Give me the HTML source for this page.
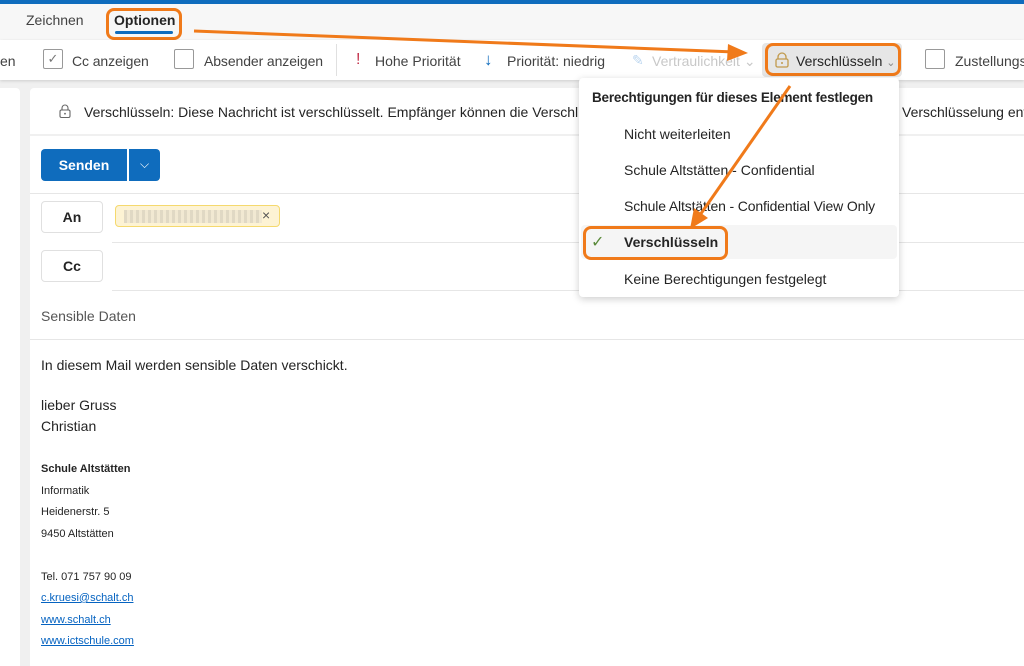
<!DOCTYPE html>
<html><head><meta charset="utf-8"><style>
*{margin:0;padding:0;box-sizing:border-box}
body{width:1024px;height:666px;overflow:hidden;background:#f0f0f0;font-family:"Liberation Sans",sans-serif;color:#242424;position:relative}
.a{position:absolute;white-space:nowrap}
.t{font-size:14px}
</style></head><body>
<div class="a" style="left:0;top:0;width:1024px;height:4px;background:#0f6cbd"></div>
<div class="a" style="left:0;top:4px;width:1024px;height:36px;background:#f7f7f7"></div>
<div class="a t" style="left:26px;top:12px;color:#424242">Zeichnen</div>
<div class="a t" style="left:114px;top:12px;font-weight:bold">Optionen</div>
<div class="a" style="left:115px;top:31px;width:58px;height:3px;background:#0f6cbd;border-radius:2px"></div>
<div class="a" style="left:106px;top:8px;width:76px;height:32px;border:3px solid #f07a1a;border-radius:8px"></div>
<div class="a" style="left:0;top:40px;width:1024px;height:40px;background:#fff;box-shadow:0 1px 3px rgba(0,0,0,.15)"></div>
<div class="a t" style="left:0;top:53px;color:#424242">en</div>
<div class="a" style="left:43px;top:49px;width:20px;height:20px;border:1px solid #999;border-radius:2px;color:#777;font-size:13px;text-align:center;line-height:18px">✓</div>
<div class="a t" style="left:72px;top:53px;color:#424242;letter-spacing:-0.1px">Cc anzeigen</div>
<div class="a" style="left:174px;top:49px;width:20px;height:20px;border:1px solid #999;border-radius:2px"></div>
<div class="a t" style="left:204px;top:53px;color:#424242;letter-spacing:-0.1px">Absender anzeigen</div>
<div class="a" style="left:336px;top:44px;width:1px;height:32px;background:#e0e0e0"></div>
<div class="a t" style="left:356px;top:51px;color:#c4314b;font-size:16px">!</div>
<div class="a t" style="left:375px;top:53px;color:#424242">Hohe Priorität</div>
<div class="a t" style="left:484px;top:50px;color:#0f6cbd;font-size:17px">↓</div>
<div class="a t" style="left:507px;top:53px;color:#424242">Priorität: niedrig</div>
<div class="a t" style="left:632px;top:52px;color:#bcd6ef">✎</div>
<div class="a t" style="left:652px;top:53px;color:#c8c8c8">Vertraulichkeit ⌄</div>
<div class="a" style="left:762px;top:43px;width:140px;height:34px;background:#e6e6e6;border-radius:4px"></div>
<svg class="a" style="left:773px;top:51px" width="18" height="18" viewBox="0 0 18 18"><path d="M5 8V6a4 4 0 0 1 8 0v2" fill="none" stroke="#c19a4c" stroke-width="1.3"/><rect x="3" y="8" width="12" height="8" rx="1.5" fill="none" stroke="#c19a4c" stroke-width="1.3"/><circle cx="9" cy="12" r="1" fill="#c19a4c"/></svg>
<div class="a t" style="left:796px;top:53px">Verschlüsseln <span style="color:#888;font-size:11px">⌄</span></div>
<div class="a" style="left:765px;top:43px;width:136px;height:33px;border:3px solid #f07a1a;border-radius:8px"></div>
<div class="a" style="left:925px;top:49px;width:20px;height:20px;border:1px solid #999;border-radius:2px"></div>
<div class="a t" style="left:955px;top:53px;color:#424242">Zustellungs</div>
<div class="a" style="left:0;top:88px;width:20px;height:578px;background:#fff;border-radius:0 4px 0 0"></div>
<div class="a" style="left:30px;top:88px;width:994px;height:578px;background:#fff;border-radius:4px 0 0 0"></div>
<div class="a" style="left:30px;top:134px;width:994px;height:2px;background:#f0f0f0"></div>
<svg class="a" style="left:57px;top:103px" width="16" height="16" viewBox="0 0 16 16"><path d="M5 7V5a3 3 0 0 1 6 0v2" fill="none" stroke="#666" stroke-width="1.1"/><rect x="3" y="7" width="10" height="7.5" rx="1.5" fill="none" stroke="#666" stroke-width="1.1"/><circle cx="8" cy="10.7" r=".9" fill="#666"/></svg>
<div class="a t" style="left:84px;top:104px">Verschlüsseln: Diese Nachricht ist verschlüsselt. Empfänger können die Verschlüs</div>
<div class="a t" style="left:902px;top:104px">Verschlüsselung ent</div>
<div class="a" style="left:41px;top:149px;width:86px;height:32px;background:#0f6cbd;border-radius:4px 0 0 4px;color:#fff;font-weight:bold;font-size:14px;text-align:center;line-height:32px">Senden</div>
<div class="a" style="left:129px;top:149px;width:31px;height:32px;background:#0f6cbd;border-radius:0 4px 4px 0;color:#fff;text-align:center;line-height:30px;font-size:12px">⌵</div>
<div class="a" style="left:30px;top:193px;width:994px;height:1px;background:#e6e6e6"></div>
<div class="a" style="left:41px;top:201px;width:62px;height:32px;border:1px solid #e0e0e0;border-radius:4px;text-align:center;line-height:30px;font-size:14px;font-weight:bold">An</div>
<div class="a" style="left:115px;top:205px;width:165px;height:22px;background:#fdf3d4;border:1px solid #f5d96e;border-radius:4px"><div style="position:absolute;left:8px;top:4px;width:138px;height:13px;background:repeating-linear-gradient(90deg,#d9d2c0 0 3px,#eee6d2 3px 6px);opacity:.8"></div><span style="position:absolute;left:146px;top:1px;font-size:14px;color:#555">×</span></div>
<div class="a" style="left:112px;top:242px;width:912px;height:1px;background:#e6e6e6"></div>
<div class="a" style="left:41px;top:250px;width:62px;height:32px;border:1px solid #e0e0e0;border-radius:4px;text-align:center;line-height:30px;font-size:14px;font-weight:bold">Cc</div>
<div class="a" style="left:112px;top:290px;width:912px;height:1px;background:#e6e6e6"></div>
<div class="a t" style="left:41px;top:308px;color:#555">Sensible Daten</div>
<div class="a" style="left:30px;top:339px;width:994px;height:1px;background:#e6e6e6"></div>
<div class="a t" style="left:41px;top:357px">In diesem Mail werden sensible Daten verschickt.</div>
<div class="a t" style="left:41px;top:397px">lieber Gruss</div>
<div class="a t" style="left:41px;top:418px">Christian</div>
<div class="a" style="left:41px;top:463px;font-size:11px;font-weight:bold">Schule Altstätten</div>
<div class="a" style="left:41px;top:485px;font-size:11px">Informatik</div>
<div class="a" style="left:41px;top:506px;font-size:11px">Heidenerstr. 5</div>
<div class="a" style="left:41px;top:528px;font-size:11px">9450 Altstätten</div>
<div class="a" style="left:41px;top:571px;font-size:11px">Tel. 071 757 90 09</div>
<div class="a" style="left:41px;top:592px;font-size:11px;color:#0563c1;text-decoration:underline">c.kruesi@schalt.ch</div>
<div class="a" style="left:41px;top:614px;font-size:11px;color:#0563c1;text-decoration:underline">www.schalt.ch</div>
<div class="a" style="left:41px;top:635px;font-size:11px;color:#0563c1;text-decoration:underline">www.ictschule.com</div>
<div class="a" style="left:579px;top:78px;width:320px;height:219px;background:#fff;border-radius:4px;box-shadow:0 2px 8px rgba(0,0,0,.2)"></div>
<div class="a" style="left:592px;top:90px;font-weight:bold;font-size:13.5px;letter-spacing:-0.2px">Berechtigungen für dieses Element festlegen</div>
<div class="a t" style="left:624px;top:126px">Nicht weiterleiten</div>
<div class="a t" style="left:624px;top:162px">Schule Altstätten - Confidential</div>
<div class="a t" style="left:624px;top:198px;letter-spacing:-0.15px">Schule Altstätten - Confidential View Only</div>
<div class="a" style="left:581px;top:225px;width:316px;height:34px;background:#f5f5f5;border-radius:4px"></div>
<div class="a" style="left:591px;top:232px;color:#5a8a3a;font-size:16px">✓</div>
<div class="a t" style="left:624px;top:234px;font-weight:bold">Verschlüsseln</div>
<div class="a" style="left:583px;top:226px;width:145px;height:34px;border:3px solid #f07a1a;border-radius:8px"></div>
<div class="a t" style="left:624px;top:271px">Keine Berechtigungen festgelegt</div>
<svg class="a" style="left:0;top:0" width="1024" height="666"><g stroke="#f07a1a" stroke-width="3" fill="#f07a1a"><line x1="194" y1="31" x2="735" y2="52"/><polygon points="748,53 728,44 727,61" stroke="none"/><line x1="790" y1="86" x2="700" y2="215"/><polygon points="690,229 694,208 708,218" stroke="none"/></g></svg>
</body></html>
